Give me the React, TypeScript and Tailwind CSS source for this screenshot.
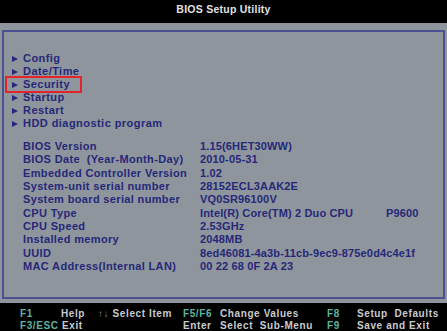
import React from "react";

const menuItems = ["Config", "Date/Time", "Security", "Startup", "Restart", "HDD diagnostic program"];

const infoRows: [string, string, string?][] = [
  ["BIOS Version", "1.15(6HET30WW)"],
  ["BIOS Date  (Year-Month-Day)", "2010-05-31"],
  ["Embedded Controller Version", "1.02"],
  ["System-unit serial number", "28152ECL3AAK2E"],
  ["System board serial number", "VQ0SR96100V"],
  ["CPU Type", "Intel(R) Core(TM) 2 Duo CPU", "P9600"],
  ["CPU Speed", "2.53GHz"],
  ["Installed memory", "2048MB"],
  ["UUID", "8ed46081-4a3b-11cb-9ec9-875e0d4c4e1f"],
  ["MAC Address(Internal LAN)", "00 22 68 0F 2A 23"],
];

function Arrow() {
  return (
    <span className="w-[11px] flex items-center">
      <span className="block w-0 h-0 border-y-[3.5px] border-y-transparent border-l-[6px] border-l-[#26287a]" />
    </span>
  );
}

export default function App() {
  return (
    <div
      className="w-[447px] h-[331px] flex flex-col bg-black overflow-hidden"
      style={{ fontFamily: '"Liberation Sans", Arial, sans-serif' }}
    >
      {/* Title bar */}
      <div className="h-[23px] pt-[3px] text-center leading-[12px] text-[#e2e2e2] font-bold text-[10.5px] tracking-[0.25px]">
        BIOS Setup Utility
      </div>

      {/* Main gray area */}
      <div className="flex-1 bg-[#8e959c] pt-[7px] px-[2px] pb-[4px] flex">
        <div className="flex-1 border-2 border-[#4b5090] pl-[8px] pt-[20px] text-[#26287a] font-bold text-[11px]">
          <div className="flex flex-col tracking-[0.45px]">
            {menuItems.map((item) => (
              <div key={item} className="h-[13px] leading-[13px] flex items-center relative">
                <Arrow />
                <span>{item}</span>
                {item === "Security" && (
                  <span className="absolute left-[-7px] top-[-2.5px] w-[77px] h-[17px] border-2 border-[#e3242b]" />
                )}
              </div>
            ))}
          </div>
          <div className="mt-[10px] pl-[11px] flex flex-col">
            {infoRows.map(([label, value, extra]) => (
              <div key={label} className="h-[13.33px] leading-[13.33px] flex whitespace-pre">
                <span className="w-[177px] tracking-[0.35px]">{label}</span>
                <span className="w-[186px] tracking-[0.15px]">{value}</span>
                {extra && <span className="tracking-[0.15px]">{extra}</span>}
              </div>
            ))}
          </div>
        </div>
      </div>

      {/* Footer */}
      <div className="h-[28px] pt-[5px] pl-[20px] font-bold text-[10px] tracking-[0.6px] leading-[12px] text-[#c9cccf]">
        <div className="flex">
          <span className="w-[41px] text-[#5fb3a0]">F1</span>
          <span className="w-[37px]">Help</span>
          <span className="w-[85px] whitespace-pre"><span className="text-[#8a9096]">↑↓</span> Select Item</span>
          <span className="w-[37px] text-[#5fb3a0]">F5/F6</span>
          <span className="w-[107px]">Change Values</span>
          <span className="w-[30px] text-[#5fb3a0]">F8</span>
          <span className="whitespace-pre">Setup  Defaults</span>
        </div>
        <div className="flex">
          <span className="w-[42px] text-[#5fb3a0]">F3/ESC</span>
          <span className="w-[121px]">Exit</span>
          <span className="w-[37px]">Enter</span>
          <span className="w-[107px] whitespace-pre">Select  Sub-Menu</span>
          <span className="w-[30px] text-[#5fb3a0]">F9</span>
          <span>Save and Exit</span>
        </div>
      </div>
    </div>
  );
}
